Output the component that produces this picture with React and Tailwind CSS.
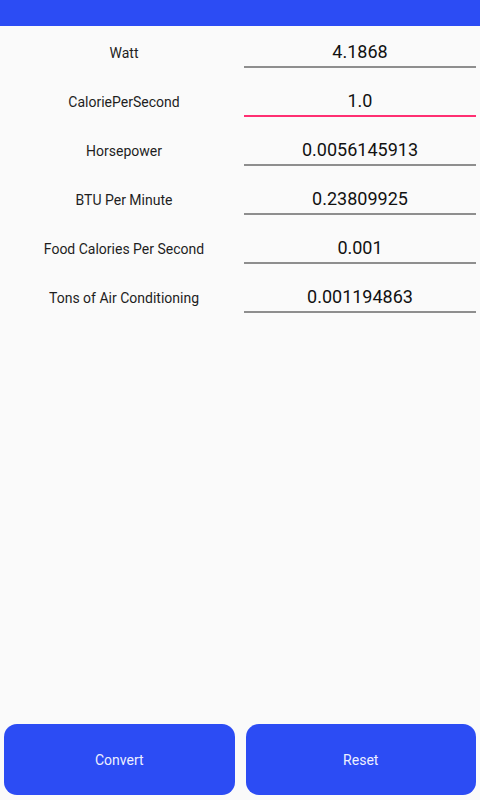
import React from "react";

const rows = [
  ["Watt", "4.1868", false],
  ["CaloriePerSecond", "1.0", true],
  ["Horsepower", "0.0056145913", false],
  ["BTU Per Minute", "0.23809925", false],
  ["Food Calories Per Second", "0.001", false],
  ["Tons of Air Conditioning", "0.001194863", false],
];

export default function App() {
  return (
    <div
      className="h-screen w-full flex flex-col bg-[#fafafa]"
      style={{ fontFamily: "Roboto, 'Liberation Sans', sans-serif" }}
    >
      <div className="h-[26px] bg-[#2c4cf4] shrink-0" />
      <div className="flex-1 flex flex-col pt-[1px]">
        {rows.map(([label, value, focused]) => (
          <div key={label} className="h-[49px] flex items-center">
            <div className="w-[244px] pl-[4px] pt-[3px] text-center text-[14px] text-[#1e1e1e]">
              {label}
            </div>
            <div
              className={
                "w-[232px] h-[32px] pt-[2px] flex items-center justify-center text-[18px] text-[#111] border-b-2 " +
                (focused ? "border-[#ff2f72]" : "border-[#8e8e8e]")
              }
            >
              {value}
            </div>
          </div>
        ))}
      </div>
      <div className="flex gap-[11px] px-[4px] pb-[5px] shrink-0">
        <button className="flex-1 h-[71px] pt-[2px] rounded-[13px] bg-[#2c4cf4] text-[#eef0ff] text-[14px]">
          Convert
        </button>
        <button className="flex-1 h-[71px] pt-[2px] rounded-[13px] bg-[#2c4cf4] text-[#eef0ff] text-[14px]">
          Reset
        </button>
      </div>
    </div>
  );
}
